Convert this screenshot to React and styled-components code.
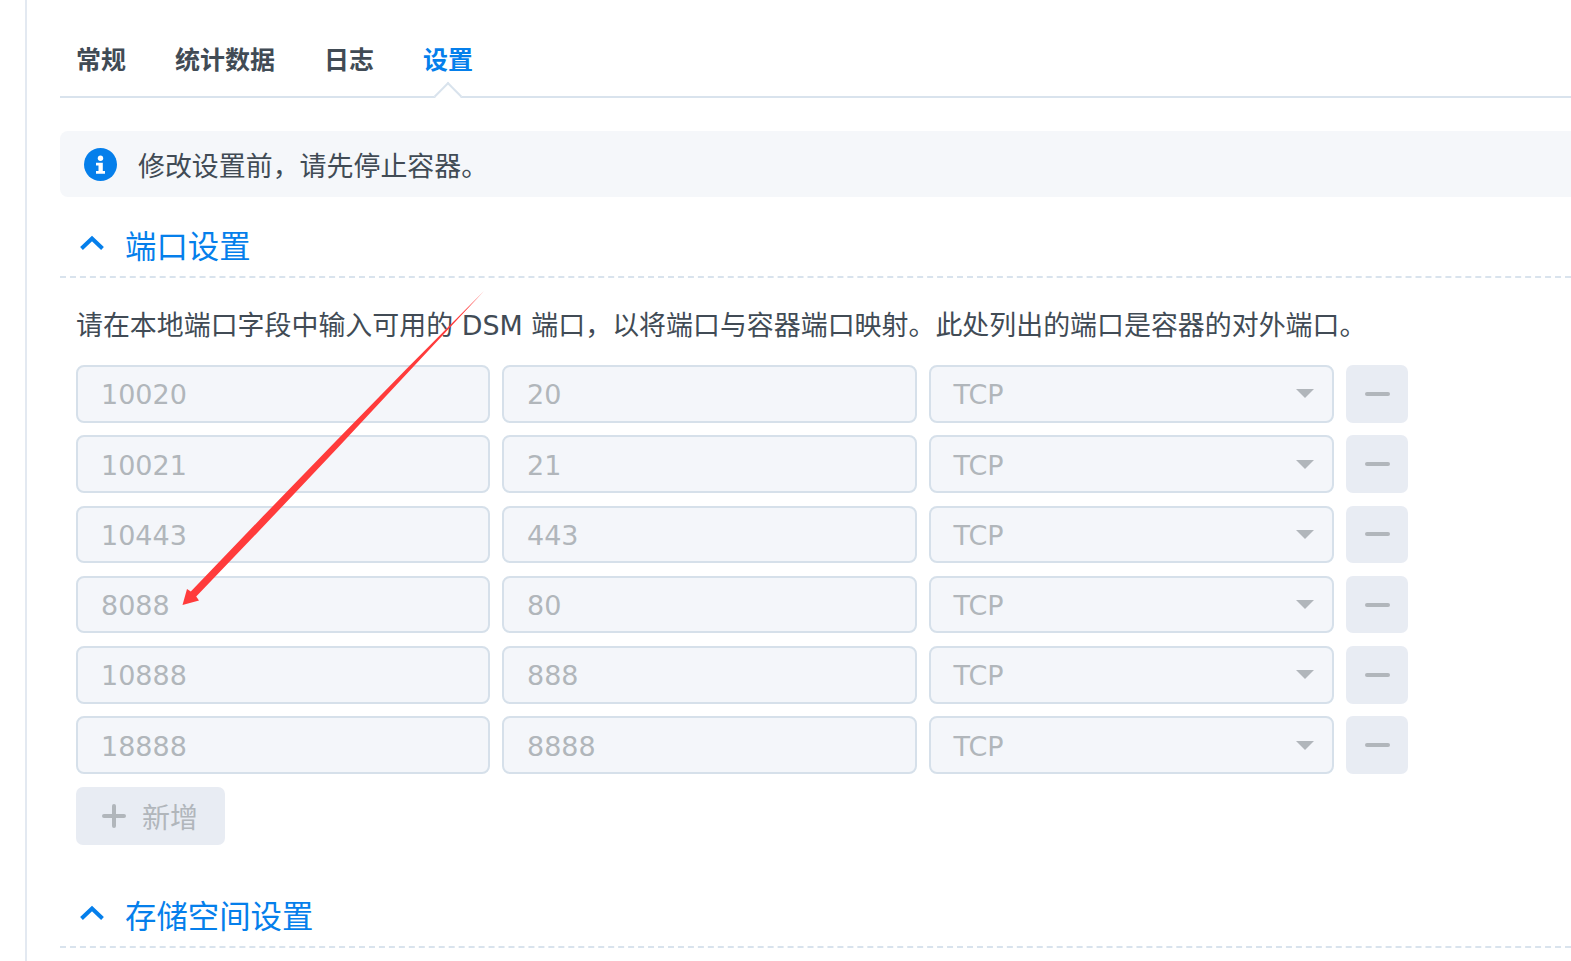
import React from 'react';
import styled, { createGlobalStyle } from 'styled-components';

const GlobalStyle = createGlobalStyle`
  html, body {
    margin: 0;
    padding: 0;
    height: 100%;
    overflow: hidden;
    background: #fff;
  }
  body {
    font-family: "DejaVu Sans", "Noto Sans CJK SC", sans-serif;
  }
`;

const Page = styled.div`
  position: relative;
  width: 1571px;
  height: 961px;
  overflow: hidden;
`;

const Panel = styled.div`
  margin-left: 25px;
  height: 100%;
  border-left: 2px solid #e3e9f1;
  padding-left: 33px;
`;

const Tabs = styled.div`
  display: flex;
  gap: 49px;
  height: 54px;
  padding: 42px 0 0 16px;
  border-bottom: 2px solid #d9e3ed;
`;

const Tab = styled.div`
  position: relative;
  height: 37px;
  font-size: 25px;
  line-height: 37px;
  font-weight: 700;
  color: ${p => (p.$active ? '#057feb' : '#414b55')};

  ${p => p.$active && `
    &::after {
      content: '';
      position: absolute;
      left: 50%;
      bottom: -27px;
      width: 20px;
      height: 20px;
      margin-left: -10px;
      background: #fff;
      border-left: 2px solid #d9e3ed;
      border-top: 2px solid #d9e3ed;
      box-sizing: border-box;
      transform: rotate(45deg);
    }
  `}
`;

const Notice = styled.div`
  display: flex;
  align-items: center;
  gap: 21px;
  height: 66px;
  margin-top: 33px;
  padding-left: 24px;
  border-radius: 8px 0 0 8px;
  background: #f5f7fa;
  font-size: 26.95px;
  color: #414b55;
`;

const SectionHeader = styled.div`
  display: flex;
  align-items: center;
  gap: 20px;
  height: 81px;
  padding: 16px 0 0 19px;
  box-sizing: border-box;
  border-bottom: 2px dashed #d9e3ed;
  font-size: 31.4px;
  color: #057feb;

  svg {
    margin-bottom: 3px;
  }
`;

const Body = styled.div`
  padding-left: 16px;
`;

const Description = styled.p`
  margin: 0;
  height: 87px;
  padding-top: 28px;
  box-sizing: border-box;
  font-size: 26.95px;
  line-height: 40px;
  color: #414b55;
  white-space: nowrap;
`;

const Rows = styled.div`
  display: flex;
  flex-direction: column;
  gap: 12.8px;
`;

const Row = styled.div`
  display: grid;
  grid-template-columns: 414px 414.5px 405.5px 62px;
  column-gap: 12px;
  height: 57.5px;
`;

const Field = styled.div`
  display: flex;
  align-items: center;
  justify-content: space-between;
  padding: 2px 18px 0 23px;
  box-sizing: border-box;
  border: 2px solid #d6e0ea;
  border-radius: 8px;
  background: #f4f6fa;
  font-size: 27px;
  color: #b1b6bb;
`;

const Caret = styled.span`
  width: 0;
  height: 0;
  margin-top: -2px;
  border-left: 9px solid transparent;
  border-right: 9px solid transparent;
  border-top: 9px solid #b1b6bb;
`;

const RemoveButton = styled.div`
  display: flex;
  align-items: center;
  justify-content: center;
  border-radius: 7px;
  background: #e8ecf3;
`;

const Dash = styled.span`
  width: 25px;
  height: 4px;
  border-radius: 2px;
  background: #b1b6bb;
`;

const AddButton = styled.div`
  display: flex;
  align-items: center;
  gap: 16px;
  width: 149px;
  height: 58px;
  margin-top: 13.5px;
  padding-left: 26px;
  box-sizing: border-box;
  border-radius: 7px;
  background: #e8ecf3;
  font-size: 28px;
  color: #b1b6bb;
`;

const StorageHeader = styled(SectionHeader)`
  margin-top: 31px;
  margin-left: -16px;
  height: 72px;
  padding-top: 7px;
`;

const ArrowLayer = styled.svg`
  position: absolute;
  left: 0;
  top: 0;
  pointer-events: none;
`;

const ports = [
  ['10020', '20'],
  ['10021', '21'],
  ['10443', '443'],
  ['8088', '80'],
  ['10888', '888'],
  ['18888', '8888'],
];

const arrowPoints = [
  '484,291', '411,369.2', '339.9,445.6', '268.2,521.3', '196.2,596.6', '199,600.5',
  '182.5,605', '187,589', '190.8,591.4', '263,516.3', '335.5,441.4', '408.6,366.8',
].join(' ');

function InfoIcon() {
  return (
    <svg width="33" height="33" viewBox="0 0 33 33">
      <circle cx="16.5" cy="16.5" r="16.5" fill="#057feb" />
      <circle cx="16.5" cy="10.2" r="2.7" fill="#fff" />
      <path d="M12 14.8h6.8V23h2.2v2.8h-9V23h2.5v-5.4H12z" fill="#fff" />
    </svg>
  );
}

function Chevron() {
  return (
    <svg width="26" height="16" viewBox="0 0 26 16">
      <path d="M2.5 13.5L13 3.5l10.5 10" fill="none" stroke="#057feb" strokeWidth="4" />
    </svg>
  );
}

function PlusIcon() {
  return (
    <svg width="24" height="24" viewBox="0 0 24 24">
      <path d="M12 2v20M2 12h20" fill="none" stroke="#b1b6bb" strokeWidth="4" strokeLinecap="round" />
    </svg>
  );
}

export default function App() {
  return (
    <Page>
      <GlobalStyle />
      <Panel>
        <Tabs>
          <Tab>常规</Tab>
          <Tab>统计数据</Tab>
          <Tab>日志</Tab>
          <Tab $active>设置</Tab>
        </Tabs>
        <Notice>
          <InfoIcon />
          修改设置前，请先停止容器。
        </Notice>
        <SectionHeader>
          <Chevron />
          端口设置
        </SectionHeader>
        <Body>
          <Description>
            请在本地端口字段中输入可用的 DSM 端口，以将端口与容器端口映射。此处列出的端口是容器的对外端口。
          </Description>
          <Rows>
            {ports.map(([local, container]) => (
              <Row key={local}>
                <Field>{local}</Field>
                <Field>{container}</Field>
                <Field>
                  TCP
                  <Caret />
                </Field>
                <RemoveButton>
                  <Dash />
                </RemoveButton>
              </Row>
            ))}
          </Rows>
          <AddButton>
            <PlusIcon />
            新增
          </AddButton>
          <StorageHeader>
            <Chevron />
            存储空间设置
          </StorageHeader>
        </Body>
      </Panel>
      <ArrowLayer width="1571" height="961" viewBox="0 0 1571 961">
        <polygon points={arrowPoints} fill="#ff3b3b" />
      </ArrowLayer>
    </Page>
  );
}
